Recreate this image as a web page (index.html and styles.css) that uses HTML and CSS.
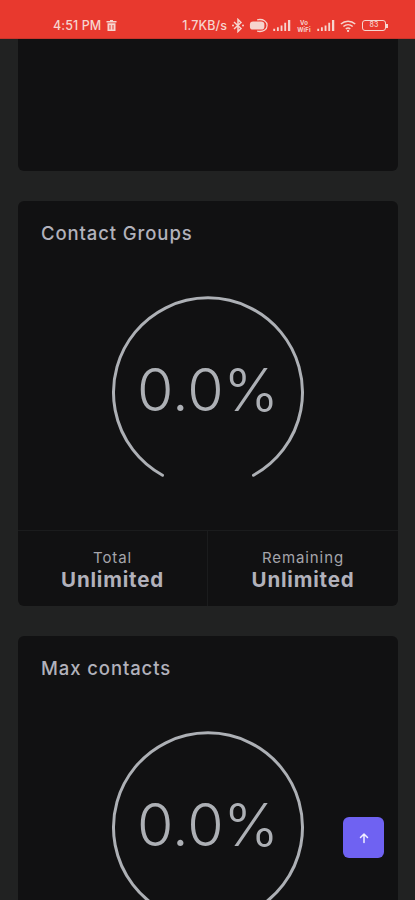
FILE: index.html
```html
<!DOCTYPE html>
<html lang="en">
<head>
  <meta charset="UTF-8" />
  <meta name="viewport" content="width=device-width, initial-scale=1.0"/>
  <title>Usage</title>
  <link rel="stylesheet" href="styles.css">
</head>
<body>
  <div class="status-bar">
    <div class="status-left">
      <span>4:51 PM</span>
      <svg width="11" height="11" viewBox="0 0 10 11"><path fill="#f6d5cf" d="M3.500 0h3v1H10v1.500H0V1h3.500zM1 3.200h8V11H1zM3 5v4.500h1V5zm3 0v4.500h1V5z"/></svg>
    </div>
    <div class="status-right">
      <span>1.7KB/s</span>
      <svg width="12" height="15" viewBox="0 0 12 15"><path fill="none" stroke="#f6d5cf" stroke-width="1.500" d="M2 4l7 6.500-3 3V1.500l3 3L2 11"/><circle cx="1" cy="7.500" r="1" fill="#f6d5cf"/><circle cx="11" cy="7.500" r="1" fill="#f6d5cf"/></svg>
      <svg width="19" height="15" viewBox="0 0 21 15"><rect x="1" y="3" width="16" height="9" rx="3.500" fill="#f6d5cf"/><path fill="none" stroke="#f6d5cf" stroke-width="1.400" d="M9 1.200c7-1.400 11 2 11 6.300s-4 7.700-11 6.300"/></svg>
      <svg class="signal" width="18" height="11" viewBox="0 0 19 12"><path fill="#f6d5cf" d="M0 9.500h2V12H0zM4 8h2v4H4zM8 6h2v6H8zM12 3h2v9h-2zM16 0h2.500v12H16z"/></svg>
      <div class="volte"><span>Vo</span><span>WiFi</span></div>
      <svg class="signal" width="18" height="11" viewBox="0 0 19 12"><path fill="#f6d5cf" d="M0 9.500h2V12H0zM4 8h2v4H4zM8 6h2v6H8zM12 3h2v9h-2zM16 0h2.500v12H16z"/></svg>
      <svg width="17" height="14" viewBox="0 0 19 14"><path fill="none" stroke="#f6d5cf" stroke-width="1.700" d="M1 4.800c4.500-4.200 11.500-4.200 16 0M3.800 7.600c3-2.700 7.400-2.700 10.400 0M6.500 10.300c1.500-1.300 3.500-1.300 5 0"/><circle cx="9" cy="12.500" r="1.300" fill="#f6d5cf"/></svg>
      <div class="battery"><div class="battery-body">83</div><div class="battery-tip"></div></div>
    </div>
  </div>

  <div class="page">
    <div class="card card-cut"></div>

    <div class="card">
      <div class="card-title">Contact Groups</div>
      <div class="gauge">
        <svg width="200" height="200" viewBox="0 0 200 200"><path class="gauge-arc" d="M54.500 183.200A94.500 94.500 0 1 1 145.500 183.200"/></svg>
        <div class="gauge-value">0.0%</div>
      </div>
      <div class="card-footer">
        <div class="stat">
          <div class="stat-label">Total</div>
          <div class="stat-value">Unlimited</div>
        </div>
        <div class="stat">
          <div class="stat-label">Remaining</div>
          <div class="stat-value">Unlimited</div>
        </div>
      </div>
    </div>

    <div class="card">
      <div class="card-title">Max contacts</div>
      <div class="gauge">
        <svg width="200" height="200" viewBox="0 0 200 200"><path class="gauge-arc" d="M54.500 183.200A94.500 94.500 0 1 1 145.500 183.200"/></svg>
        <div class="gauge-value">0.0%</div>
      </div>
    </div>
  </div>

  <button class="to-top" aria-label="Back to top">
    <svg width="12" height="12" viewBox="0 0 12 12"><path fill="none" stroke="#f1efff" stroke-width="1.500" stroke-linecap="round" stroke-linejoin="round" d="M6 10.500V2M2.500 5.500L6 2l3.500 3.500"/></svg>
  </button>
</body>
</html>
```

FILE: styles.css
```css
html, body {
  margin: 0;
  height: 900px;
  overflow: hidden;
}

body {
  font-family: Inter, "Open Sans", sans-serif;
  background: #212222;
  color: #b2b1bb;
}

.status-bar {
  height: 39px;
  box-sizing: border-box;
  padding: 13px 5px 0 53px;
  background: #e8392e;
  border-bottom: 1px solid #c9352b;
  color: #f6d5cf;
  font-size: 12.500px;
  font-weight: 500;
  letter-spacing: 0.1px;
  display: flex;
  justify-content: space-between;
  align-items: center;
}

.status-left {
  display: flex;
  align-items: center;
  gap: 5px;
  height: 17px;
}

.status-right {
  display: flex;
  align-items: center;
  gap: 5px;
  height: 17px;
  margin-right: 22px;
}

.volte {
  display: flex;
  flex-direction: column;
  width: 16px;
  font-size: 6px;
  line-height: 7px;
  font-weight: 700;
  text-align: center;
}

.battery {
  display: flex;
  align-items: center;
}

.battery-body {
  width: 24px;
  height: 11px;
  box-sizing: border-box;
  border: 1.500px solid #f6d5cf;
  border-radius: 3px;
  font-size: 7px;
  line-height: 8px;
  text-align: center;
}

.battery-tip {
  width: 2px;
  height: 4px;
  background: #f6d5cf;
}

.page {
  padding: 0 17px 0 18px;
  display: flex;
  flex-direction: column;
  gap: 30px;
}

.card {
  background: #111112;
  border-radius: 6px;
}

.card-cut {
  height: 131.500px;
  border-radius: 0 0 6px 6px;
}

.card-title {
  padding: 21.500px 23px 0;
  font-size: 18.500px;
  line-height: 22px;
  font-weight: 500;
  letter-spacing: 0.900px;
}

.gauge {
  display: grid;
  place-items: center;
  margin-top: 48px;
  height: 196px;
  align-items: start;
}

.gauge svg,
.gauge-value {
  grid-area: 1 / 1;
}

.gauge-arc {
  fill: none;
  stroke: #adb0b5;
  stroke-width: 3px;
  stroke-linecap: round;
}

.gauge-value {
  margin-top: 61px;
  font-size: 59px;
  line-height: 74px;
  font-weight: 300;
  color: #adb0b5;
}

.card-footer {
  margin-top: 41.500px;
  border-top: 1px solid #1b1c1d;
  display: grid;
  grid-template-columns: 189px 1fr;
  height: 75px;
}

.stat {
  text-align: center;
  padding-top: 18px;
}

.stat + .stat {
  border-left: 1px solid #1b1c1d;
}

.stat-label {
  font-size: 15px;
  line-height: 18px;
  letter-spacing: 0.900px;
  color: #a5a5ab;
}

.stat-value {
  font-size: 20.500px;
  line-height: 26px;
  font-weight: 700;
  letter-spacing: 0.800px;
}

.to-top {
  position: fixed;
  left: 343px;
  top: 817px;
  width: 41px;
  height: 41px;
  padding: 0;
  border: none;
  border-radius: 6px;
  background: #6f62f2;
  display: flex;
  align-items: center;
  justify-content: center;
}
```
